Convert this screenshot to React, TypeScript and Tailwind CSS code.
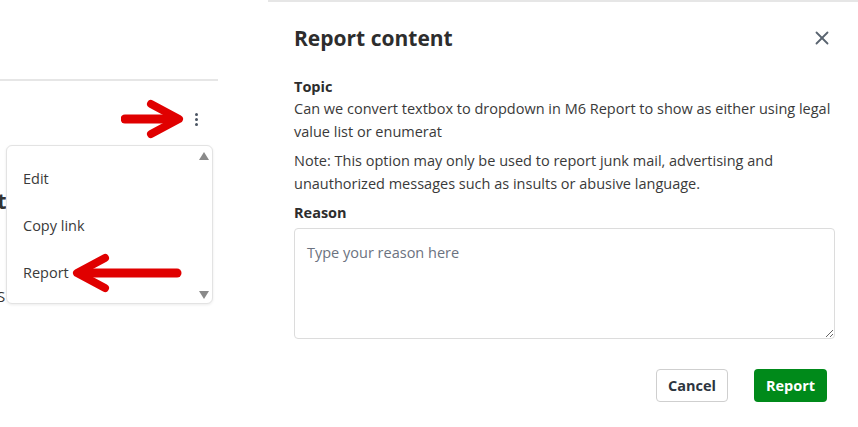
import { X } from 'lucide-react';

const font = { fontFamily: '"Open Sans", "Liberation Sans", sans-serif' };

function RightArrow() {
  return (
    <svg width="66" height="40" viewBox="0 0 66 40" className="block">
      <path d="M4 20 H46" stroke="#e00000" strokeWidth="9" strokeLinecap="round" fill="none" />
      <path d="M30 5 L58 20 L30 35" stroke="#e00000" strokeWidth="8" strokeLinecap="round" strokeLinejoin="round" fill="none" />
    </svg>
  );
}

function LeftArrow() {
  return (
    <svg width="112" height="40" viewBox="0 0 112 40" className="block">
      <path d="M14 20 H106" stroke="#e00000" strokeWidth="9" strokeLinecap="round" fill="none" />
      <path d="M34 5 L6 20 L34 35" stroke="#e00000" strokeWidth="8" strokeLinecap="round" strokeLinejoin="round" fill="none" />
    </svg>
  );
}

export default function App() {
  return (
    <div className="flex h-[427px] w-[858px] overflow-hidden bg-white text-[#333]" style={font}>
      {/* left: page with the dropdown menu */}
      <div className="relative w-[218px] shrink-0">
        <div className="mt-[79px] border-t-2 border-[#e6e6e6]" />
        <div className="mt-[18px] flex h-[40px] items-center justify-end pr-[20px]">
          <RightArrow />
          <div className="ml-[8px] flex flex-col gap-[2px]">
            <span className="h-[3px] w-[3px] rounded-full bg-[#4b5563]" />
            <span className="h-[3px] w-[3px] rounded-full bg-[#4b5563]" />
            <span className="h-[3px] w-[3px] rounded-full bg-[#4b5563]" />
          </div>
        </div>
        <div className="mt-[50px] -ml-[3px] text-[22px] font-bold leading-none">t</div>
        <div className="mt-[78px] -ml-[3px] text-[15px] leading-none">S</div>

        <div className="absolute left-[6px] top-[145px] h-[159px] w-[207px] rounded-[6px] border border-[#e3e3e3] bg-white shadow-[0_1px_3px_rgba(0,0,0,0.08)]">
          <div className="absolute right-[3px] top-[6px] h-0 w-0 border-x-[5px] border-b-[8px] border-x-transparent border-b-[#8a8a8a]" />
          <div className="absolute bottom-[4px] right-[3px] h-0 w-0 border-x-[5px] border-t-[8px] border-x-transparent border-t-[#8a8a8a]" />
          <ul className="flex flex-col pt-[22px] pl-[16px] text-[14.5px] text-[#3a3a3a]">
            <li className="h-[47px] leading-[22px]">Edit</li>
            <li className="h-[47px] leading-[22px]">Copy link</li>
            <li className="flex h-[22px] items-center leading-[22px]">
              Report
              <span className="-my-[9px] ml-[2px]">
                <LeftArrow />
              </span>
            </li>
          </ul>
        </div>
      </div>

      {/* right: report dialog */}
      <div className="ml-[50px] flex-1 border-t-2 border-[#e6e6e6] px-[26px] pt-[22px]">
        <div className="flex items-center justify-between pr-[2px]">
          <h2 className="text-[21px] font-bold leading-[28px] text-[#2d2d2d]">Report content</h2>
          <X size={22} strokeWidth={2} className="text-[#5a6470]" />
        </div>

        <div className="mt-[25px] text-[14.5px] font-bold leading-[20px] text-[#2d2d2d]">Topic</div>
        <p className="text-[14.5px] leading-[23px] text-[#3a3a3a]">
          Can we convert textbox to dropdown in M6 Report to show as either using legal value list or enumerat
        </p>
        <p className="mt-[6px] text-[14.5px] leading-[23px] text-[#3a3a3a]">
          Note: This option may only be used to report junk mail, advertising and unauthorized messages such as insults or abusive language.
        </p>
        <div className="mt-[7px] text-[14.5px] font-bold leading-[22px] text-[#2d2d2d]">Reason</div>
        <textarea
          className="mt-[4px] block h-[111px] w-[541px] rounded-[4px] border border-[#dcdcdc] px-[12px] pt-[13px] pb-[12px] text-[14.5px] leading-[22px] text-[#333] outline-none placeholder:text-[#6b7280]"
          placeholder="Type your reason here"
          style={font}
        />

        <div className="mt-[30px] flex justify-end gap-[26px] pr-[5px]">
          <button className="h-[33px] w-[72px] rounded-[4px] border border-[#cfcfcf] bg-white text-[14.5px] font-bold text-[#2d3540]">
            Cancel
          </button>
          <button className="mr-[3px] h-[33px] w-[73px] rounded-[4px] bg-[#008a1a] text-[14.5px] font-bold text-white">
            Report
          </button>
        </div>
      </div>
    </div>
  );
}
